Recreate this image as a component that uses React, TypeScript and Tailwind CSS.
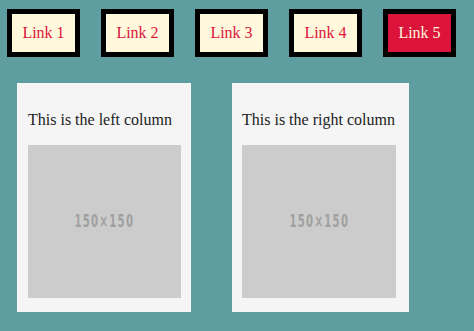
import React from 'react';

const links = ['Link 1', 'Link 2', 'Link 3', 'Link 4', 'Link 5'];

function Placeholder({ w }: { w: string }) {
  return (
    <div className={`${w} h-[153px] bg-[#cccccc] flex items-center justify-center`}>
      <span
        className="text-[17px] font-bold text-[#a0a0a0] tracking-[2px]"
        style={{ fontFamily: '"DejaVu Sans Condensed", "DejaVu Sans", sans-serif', transform: 'scaleX(0.66)' }}
      >
        150×150
      </span>
    </div>
  );
}

export default function App() {
  return (
    <div
      className="w-[474px] h-[331px] bg-[#5f9ea0] overflow-hidden"
      style={{ fontFamily: '"Liberation Serif", "Times New Roman", serif' }}
    >
      {/* ── Nav ── */}
      <nav className="flex gap-[21px] pl-[7px] pt-[9px]">
        {links.map((l, i) => (
          <a
            key={l}
            href="#"
            className={`w-[73px] h-[48px] border-[5px] border-black flex items-center justify-center text-[16px] ${
              i === 4 ? 'bg-[#dc143c] text-[#fff8dc]' : 'bg-[#fff8dc] text-[#dc143c]'
            }`}
          >
            {l}
          </a>
        ))}
      </nav>

      {/* ── Columns ── */}
      <div className="flex gap-[41px] pl-[17px] pt-[26px]">
        <div className="w-[174px] h-[229px] bg-[#f5f5f5] pl-[11px] pt-[27px]">
          <p className="text-[16px] leading-[20px] text-[#222] whitespace-nowrap">This is the left column</p>
          <div className="mt-[15px]">
            <Placeholder w="w-[153px]" />
          </div>
        </div>
        <div className="w-[177px] h-[229px] bg-[#f5f5f5] pl-[10px] pt-[27px]">
          <p className="text-[16px] leading-[20px] text-[#222] whitespace-nowrap">This is the right column</p>
          <div className="mt-[15px]">
            <Placeholder w="w-[154px]" />
          </div>
        </div>
      </div>
    </div>
  );
}
